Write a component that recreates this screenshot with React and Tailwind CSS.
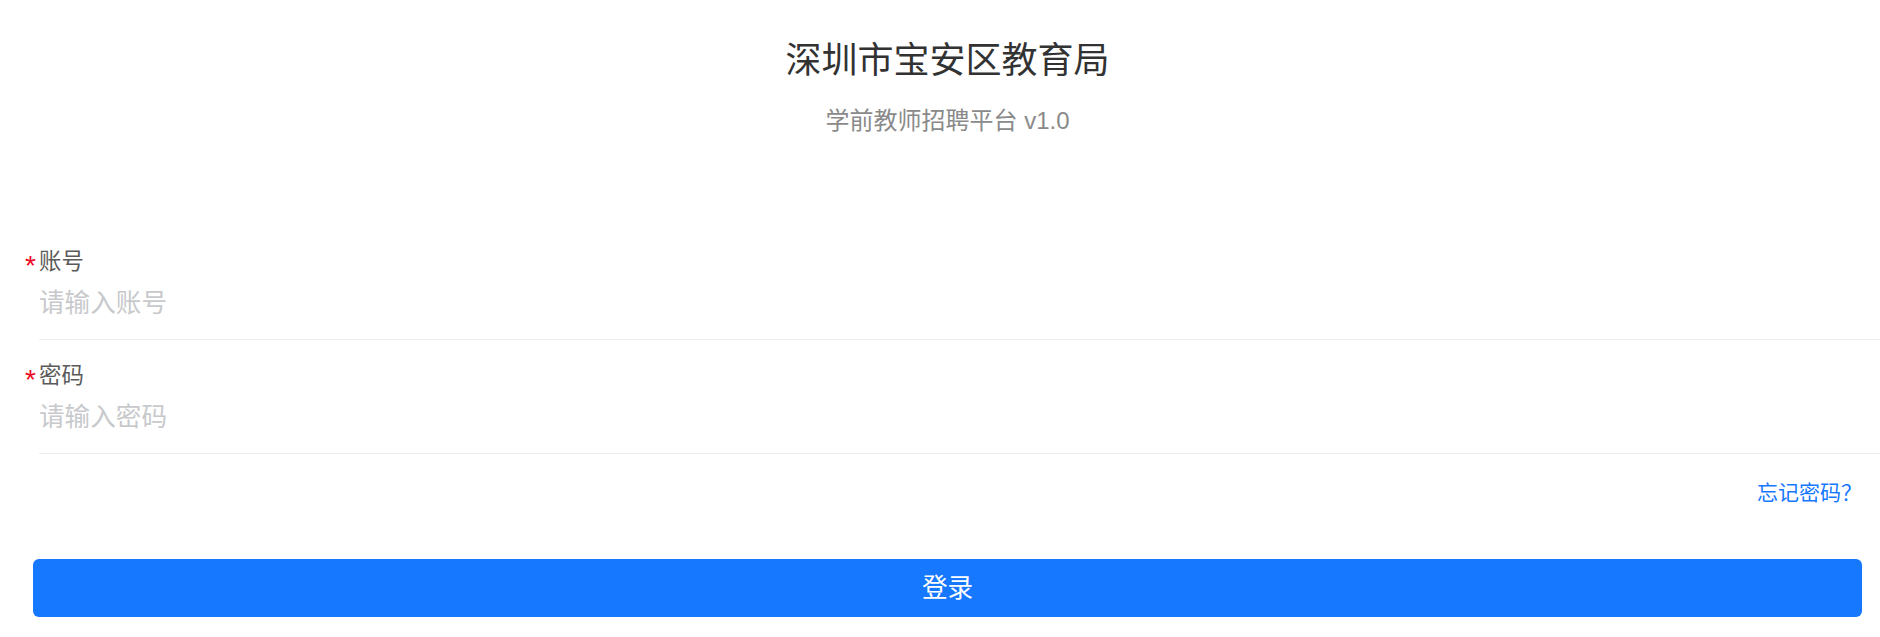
export default function App() {
  const font = { fontFamily: '"Liberation Sans", "Noto Sans CJK SC", sans-serif' };
  return (
    <div className="w-[1880px] h-[637px] bg-white overflow-hidden" style={font}>
      <div className="pl-[33px] pr-[18px]">
        <div className="flex flex-col items-center">
          <h1 className="mt-[36px] text-[36px] leading-[50px] text-[#323233] font-normal">深圳市宝安区教育局</h1>
          <p className="mt-[18px] text-[24px] leading-[34px] text-[#8a8a8a]">学前教师招聘平台 v1.0</p>
        </div>
        <div className="mt-[108px] -mr-[18px] pl-[6px]">
          <div className="relative border-b border-[#ebedf0] pb-[18px]">
            <div className="relative text-[22.4px] leading-[32px] text-[#5a5a5a]">
              <span className="absolute -left-[14px] top-[6px] text-[28px] leading-[28px] text-[#ee0a24]">*</span>
              账号
            </div>
            <div className="mt-[7px] text-[25.6px] leading-[36px] text-[#c8c9cc]">请输入账号</div>
          </div>
          <div className="relative border-b border-[#ebedf0] pb-[18px] pt-[20px]">
            <div className="relative text-[22.4px] leading-[32px] text-[#5a5a5a]">
              <span className="absolute -left-[14px] top-[6px] text-[28px] leading-[28px] text-[#ee0a24]">*</span>
              密码
            </div>
            <div className="mt-[7px] text-[25.6px] leading-[36px] text-[#c8c9cc]">请输入密码</div>
          </div>
        </div>
        <div className="flex justify-end mt-[24px]">
          <span className="text-[21px] leading-[30px] text-[#1677ff]">忘记密码？</span>
        </div>
        <button className="mt-[51px] w-full h-[58px] rounded-[6px] bg-[#1677ff] text-white text-[25.6px] flex items-center justify-center">登录</button>
      </div>
    </div>
  );
}
